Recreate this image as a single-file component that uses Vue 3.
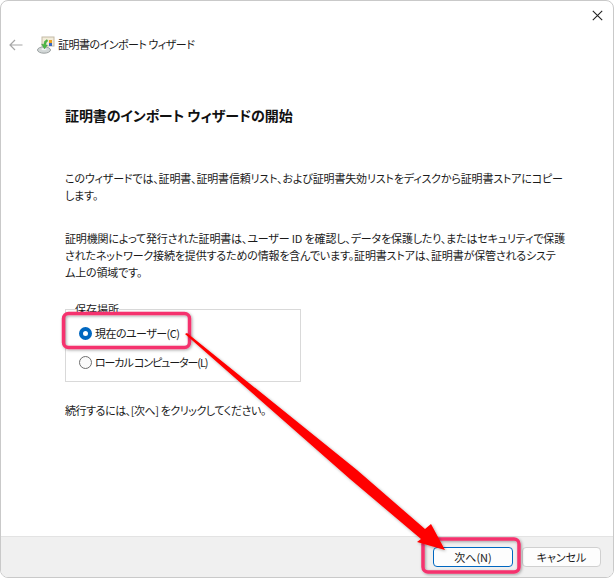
<script setup>
const title = '証明書のインポート ウィザード'
</script>

<template>
  <div class="window">
    <div class="titlebar">
      <svg class="close" width="11" height="11" viewBox="0 0 11 11"><path d="M.8.8l9.4 9.4M10.2.8L.8 10.2" stroke="#222" stroke-width="1.1" fill="none"/></svg>
    </div>
    <div class="nav">
      <svg class="back" width="14" height="12" viewBox="0 0 14 12"><path d="M13.5 6H1M6 1 1 6l5 5" stroke="#a6a6a6" stroke-width="1.2" fill="none"/></svg>
      <svg class="wizicon" width="18" height="18" viewBox="0 0 18 18">
        <rect x="5" y="1" width="12" height="9" fill="#f3ecd9" stroke="#c4baa6" stroke-width="1"/>
        <rect x="12" y="4" width="3" height="3" fill="#e8a020"/>
        <rect x="12" y="7" width="3" height="3" fill="#3768c0"/>
        <ellipse cx="7" cy="14" rx="6.5" ry="3.2" fill="#d2d7d7" stroke="#9ba1a1" stroke-width="1"/>
        <ellipse cx="7" cy="13.2" rx="2.6" ry="1.1" fill="#f0f3f3"/>
        <path d="M10 3.5 7.5 5.2 6.7 8.5 4.5 8 7.5 13 10.5 9 8.7 8.7 9.5 6.2 11 5Z" fill="#4cb846" stroke="#2c8a2a" stroke-width=".3"/>
      </svg>
      <span class="navtitle">{{ title }}</span>
    </div>
    <main class="content">
      <h1 class="heading">証明書のインポート ウィザードの開始</h1>
      <p class="p1">このウィザードでは、証明書、証明書信頼リスト、および証明書失効リストをディスクから証明書ストアにコピー<br>します。</p>
      <p class="p2">証明機関によって発行された証明書は、ユーザー ID を確認し、データを保護したり、またはセキュリティで保護<br>されたネットワーク接続を提供するための情報を含んでいます。証明書ストアは、証明書が保管されるシステ<br>ム上の領域です。</p>
      <fieldset class="group">
        <legend class="legend">保存場所</legend>
        <label class="radio"><span class="dot on"></span>現在のユーザー(C)</label>
        <label class="radio tight"><span class="dot"></span>ローカル コンピューター(L)</label>
      </fieldset>
      <p class="p3">続行するには、[次へ] をクリックしてください。</p>
    </main>
    <footer class="footer">
      <button class="btn primary">次へ(N)</button>
      <button class="btn">キャンセル</button>
    </footer>
    <svg class="overlay" width="614" height="578" viewBox="0 0 614 578">
      <defs>
        <filter id="sh" x="-20%" y="-20%" width="140%" height="140%"><feDropShadow dx="1" dy="1" stdDeviation="1.5" flood-color="#000" flood-opacity=".35"/></filter>
      </defs>
      <rect x="63.5" y="313.5" width="126" height="34" rx="5" fill="none" stroke="#f5326e" stroke-width="3.5" filter="url(#sh)"/>
      <rect x="423" y="539" width="96" height="33" rx="5" fill="none" stroke="#f5326e" stroke-width="3.5" filter="url(#sh)"/>
      <path d="M185 334 187 333 357 470 425 529 431 524 445 550 417 542 421 539 350 479Z" fill="#ff0000" filter="url(#sh)"/>
    </svg>
  </div>
</template>

<style>
html, body { margin: 0; background: #fff; }
</style>

<style scoped>
.window {
  position: relative;
  box-sizing: border-box;
  width: 614px;
  height: 578px;
  border: 1px solid #c9c9c9;
  border-radius: 8px;
  background: #fff;
  display: flex;
  flex-direction: column;
  overflow: hidden;
  font-family: "Noto Sans CJK JP", "Noto Sans", sans-serif;
  font-feature-settings: "palt";
  font-size: 11px;
  line-height: 17px;
  color: #1a1a1a;
}
.titlebar {
  height: 28px;
  display: flex;
  justify-content: flex-end;
  padding: 9px 10px 0 0;
  box-sizing: border-box;
}
.nav {
  height: 32px;
  display: flex;
  align-items: center;
  padding-left: 8px;
}
.back { margin-right: 14px; }
.wizicon { margin-right: 3px; }
.navtitle { margin-top: -1px; letter-spacing: -.5px; }
.content {
  flex: 1;
  padding: 0 40px 0 64px;
  min-height: 0;
}
.heading {
  margin: 44px 0 0;
  font-size: 14px;
  line-height: 20px;
  font-weight: 700;
  letter-spacing: -.1px;
  color: #111;
}
.p1 { margin: 45px 0 0; white-space: nowrap; letter-spacing: -.17px; }
.p2 { margin: 26px 0 0; white-space: nowrap; letter-spacing: -.15px; }
.group {
  margin: 28px 0 0;
  padding: 0 0 0 13px;
  width: 236px;
  height: 73px;
  box-sizing: border-box;
  border: 1px solid #d9d9d9;
  position: relative;
}
.legend {
  position: absolute;
  left: 9px;
  top: -9px;
  padding: 0;
  line-height: 17px;
  background: #fff;
}
.radio {
  display: flex;
  align-items: center;
  height: 29px;
  letter-spacing: -.55px;
}
.radio.tight { letter-spacing: -1.1px; }
.radio:first-of-type { margin-top: 9px; }
.dot {
  box-sizing: border-box;
  width: 13px;
  height: 13px;
  border-radius: 50%;
  border: 1px solid #6e6e6e;
  background: #fafafa;
  margin-right: 3px;
}
.dot.on {
  border: 4px solid #0067c0;
  background: #fff;
}
.p3 { margin: 20px 0 0; letter-spacing: -.45px; }
.footer {
  height: 41px;
  background: #f0f0f0;
  border-top: 1px solid #e3e3e3;
  box-sizing: border-box;
  display: flex;
  justify-content: flex-end;
  align-items: center;
  gap: 9px;
  padding: 0 12px 0 0;
}
.btn {
  box-sizing: border-box;
  width: 79px;
  height: 20px;
  padding: 0;
  border: 1px solid #d0d0d0;
  border-radius: 4px;
  background: #fdfdfd;
  font: inherit;
  font-feature-settings: "palt";
  font-size: 11px;
  line-height: 16px;
  color: #1a1a1a;
}
.btn.primary {
  width: 80px;
  border-color: #0067c0;
}
.overlay {
  position: absolute;
  left: -1px;
  top: -1px;
  pointer-events: none;
}
</style>
